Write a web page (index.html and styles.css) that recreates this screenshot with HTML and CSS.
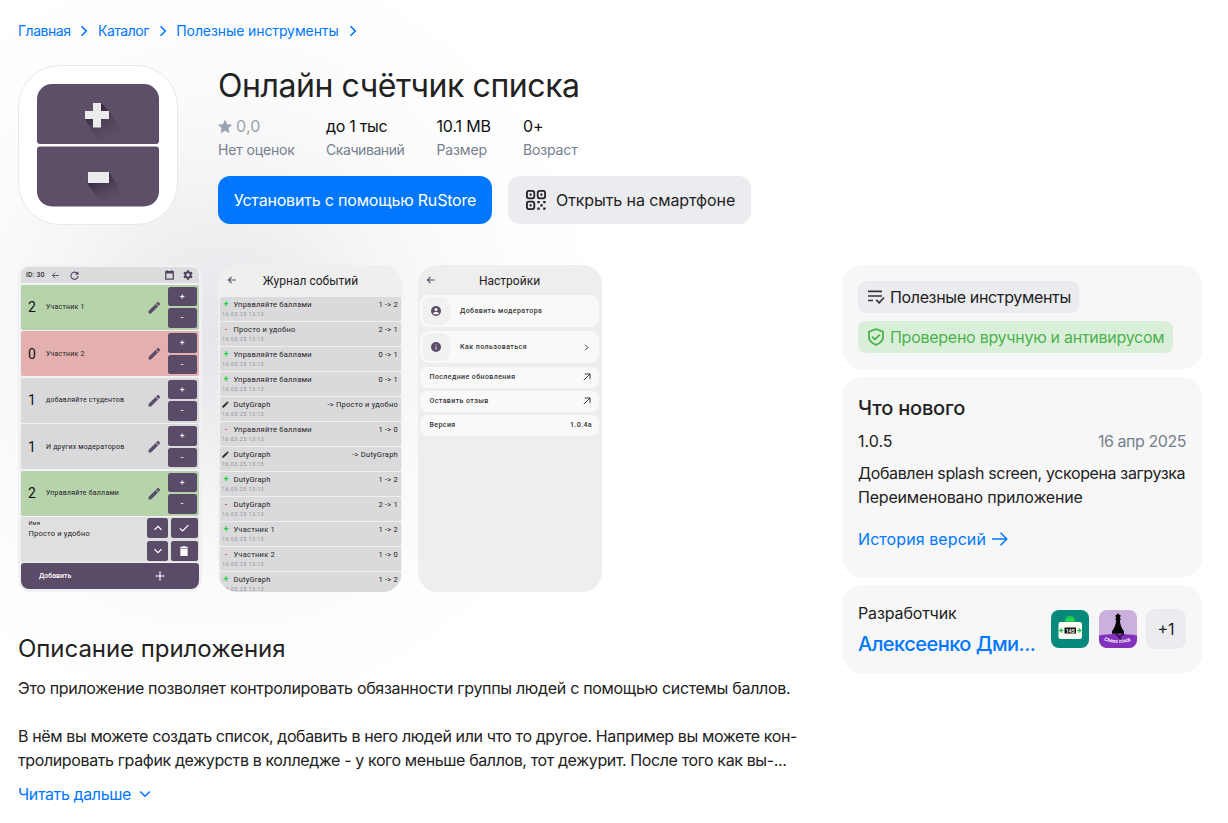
FILE: index.html
```
<!DOCTYPE html>
<html lang="ru">
<head>
	<meta charset="UTF-8" />
	<meta name="viewport" content="width=device-width, initial-scale=1.0" />
	<title>Онлайн счётчик списка</title>
	<link rel="stylesheet" href="styles.css">
</head>
<body>
	<svg class="sprite" width="0" height="0">
		<symbol id="chevron" viewBox="0 0 8 12"><path d="M1.5 1.2 6.3 6 1.5 10.8" fill="none" stroke="currentColor" stroke-width="1.6"/></symbol>
		<symbol id="back" viewBox="0 0 24 24"><path d="M21 12H4M11 4.5 3.5 12l7.500 7.500" fill="none" stroke="currentColor" stroke-width="2.500"/></symbol>
		<symbol id="pencil" viewBox="0 0 24 24"><path d="M1.500 18.300V22.500h4.200L18.200 10l-4.200-4.200zM21.800 6.400c.5-.5.5-1.200 0-1.600l-2.600-2.600c-.5-.5-1.200-.5-1.600 0l-2.300 2.300 4.200 4.200z" fill="currentColor" stroke="currentColor" stroke-width=".8"/></symbol>
		<symbol id="open" viewBox="0 0 10 10"><path d="M1 9 8.800 1.200M2.200 1.200h6.600v6.600" fill="none" stroke="currentColor" stroke-width="1.200"/></symbol>
	</svg>
	<div class="page">
		<nav class="crumbs">
			<a href="#" class="c1">Главная</a><svg><use href="#chevron"/></svg>
			<a href="#" class="c1">Каталог</a><svg><use href="#chevron"/></svg>
			<a href="#" class="c2">Полезные инструменты</a><svg><use href="#chevron"/></svg>
		</nav>
		<header class="head">
			<div class="app_icon">
				<svg width="122" height="123" viewBox="0 0 122 123">
					<defs>
						<linearGradient id="shade" x1="0" y1="0" x2=".6" y2="1"><stop offset=".2" stop-color="#30263b"/><stop offset="1" stop-color="#5d4f68" stop-opacity="0"/></linearGradient>
					</defs>
					<path d="M15 0h92a15 15 0 0 1 15 15v42a3 3 0 0 1-3 3H3a3 3 0 0 1-3-3V15A15 15 0 0 1 15 0z" fill="#5d4f68"/>
					<path d="M3 62.500h116a3 3 0 0 1 3 3V107.500a15 15 0 0 1-15 15H15a15 15 0 0 1-15-15V65.500a3 3 0 0 1 3-3z" fill="#5d4f68"/>
					<path d="M48 35 63 60H93L72 27 64 19z" fill="url(#shade)"/>
					<path d="M50 99 66 122H93L72 88z" fill="url(#shade)"/>
					<path d="M56 19h8v8h8v8h-8v8.500h-8V35h-8v-8h8z" fill="#ebebec"/>
					<path d="M51 88h21v11H51z" fill="#ebebec"/>
				</svg>
			</div>
			<div class="head_info">
				<h1>Онлайн счётчик списка</h1>
				<div class="stats">
					<div class="stat s1"><b class="muted"><svg width="14" height="13" viewBox="0 0 14 13"><path d="m7 .3 1.900 4.200 4.600.5-3.400 3.100.9 4.600L7 10.400l-4 2.300.9-4.600L.5 5l4.600-.5z" fill="#99a2ad" stroke="#99a2ad" stroke-width=".6" stroke-linejoin="round"/></svg>0,0</b><span>Нет оценок</span></div>
					<div class="stat s2"><b>до 1 тыс</b><span>Скачиваний</span></div>
					<div class="stat s3"><b>10.1 MB</b><span>Размер</span></div>
					<div class="stat s4"><b>0+</b><span>Возраст</span></div>
				</div>
				<div class="buttons">
					<button type="button" class="btn btn_blue">Установить с помощью RuStore</button>
					<button type="button" class="btn btn_gray">
						<svg width="20" height="20" viewBox="0 0 20 20" fill="none" stroke="#222" stroke-width="1.800"><rect x=".9" y=".9" width="7.400" height="7.400" rx="2"/><rect x="11.700" y=".9" width="7.400" height="7.400" rx="2"/><rect x=".9" y="11.700" width="7.400" height="7.400" rx="2"/><path d="M3.600 4.600h2M14.400 4.600h2M3.600 15.400h2M11.300 12.200h2.400M17.200 12.200h2.400M14.300 15.400h2.400M11.300 18.600h2.400M17.200 18.600h2.400" stroke-width="2.200"/></svg>
						Открыть на смартфоне
					</button>
				</div>
			</div>
		</header>

		<div class="columns">
			<main class="main">
				<div class="shots">
					<div class="shot shot_list">
						<div class="l_bar">ID: 30
							<svg class="ic_back"><use href="#back"/></svg>
							<svg class="ic_reload" viewBox="0 0 10 10"><path d="M8.300 3A4 4 0 1 0 9 5.500M8.900.8v2.700H6.200" fill="none" stroke="currentColor" stroke-width="1.200"/></svg>
							<svg class="ic_cal" viewBox="0 0 10 11"><path d="M.8 1.800h8.400v8.400H.8zM1 3.200h8M2.700.3v2M7.300.3v2" fill="none" stroke="currentColor" stroke-width="1.400"/></svg>
							<svg class="ic_gear" viewBox="0 0 10 10"><circle cx="5" cy="5" r="2.700" fill="none" stroke="currentColor" stroke-width="2"/><path d="M5 .3v1.500M5 8.200v1.500M.9 2.600l1.300.8M7.800 6.600l1.300.8M.9 7.400l1.300-.8M7.800 3.400l1.300-.8" stroke="currentColor" stroke-width="2.200"/></svg>
						</div>
						<div class="l_row green"><i>2</i><span>Участник 1</span><svg><use href="#pencil"/></svg><div class="pm"><b>+</b><b>-</b></div></div>
						<div class="l_row red"><i>0</i><span>Участник 2</span><svg><use href="#pencil"/></svg><div class="pm"><b>+</b><b>-</b></div></div>
						<div class="l_row"><i>1</i><span>добавляйте студентов</span><svg><use href="#pencil"/></svg><div class="pm"><b>+</b><b>-</b></div></div>
						<div class="l_row"><i>1</i><span>И других модераторов</span><svg><use href="#pencil"/></svg><div class="pm"><b>+</b><b>-</b></div></div>
						<div class="l_row green"><i>2</i><span>Управляйте баллами</span><svg><use href="#pencil"/></svg><div class="pm"><b>+</b><b>-</b></div></div>
						<div class="l_edit">
							<div class="l_name"><small>Имя</small>Просто и удобно</div>
							<div class="l_keys">
								<b><svg viewBox="0 0 10 10"><path d="M1.500 6.700 5 3.300l3.500 3.400"/></svg></b>
								<b><svg viewBox="0 0 10 10"><path d="m.8 5.300 2.700 2.700 5.900-5.900"/></svg></b>
								<b><svg viewBox="0 0 10 10"><path d="M1.500 3.300 5 6.700l3.500-3.400"/></svg></b>
								<b><svg viewBox="0 0 10 10"><path d="M2 3h6v6.500H2zM1.200 1.300h7.600M3.800.7h2.400" class="solid"/></svg></b>
							</div>
						</div>
						<div class="l_add"><span>Добавить</span><svg width="10" height="10" viewBox="0 0 10 10"><path d="M5 .5v9M.5 5h9" stroke="#fff" stroke-width="1.200"/></svg></div>
					</div>
					<div class="shot shot_log">
						<div class="s_title"><svg><use href="#back"/></svg>Журнал событий</div>
						<div class="j_row"><i class="plus">+</i><span>Управляйте баллами</span><em>1 -&gt; 2</em><small>16.03.25 13:13</small></div>
						<div class="j_row"><i class="minus">-</i><span>Просто и удобно</span><em>2 -&gt; 1</em><small>16.03.25 13:13</small></div>
						<div class="j_row"><i class="plus">+</i><span>Управляйте баллами</span><em>0 -&gt; 1</em><small>16.03.25 13:13</small></div>
						<div class="j_row"><i class="plus">+</i><span>Управляйте баллами</span><em>0 -&gt; 1</em><small>16.03.25 13:13</small></div>
						<div class="j_row"><i><svg><use href="#pencil"/></svg></i><span>DutyGraph</span><em>-&gt; Просто и удобно</em><small>16.03.25 13:13</small></div>
						<div class="j_row"><i class="minus">-</i><span>Управляйте баллами</span><em>1 -&gt; 0</em><small>16.03.25 13:13</small></div>
						<div class="j_row"><i><svg><use href="#pencil"/></svg></i><span>DutyGraph</span><em>-&gt; DutyGraph</em><small>16.03.25 13:13</small></div>
						<div class="j_row"><i class="plus">+</i><span>DutyGraph</span><em>1 -&gt; 2</em><small>16.03.25 13:13</small></div>
						<div class="j_row"><i class="minus">-</i><span>DutyGraph</span><em>2 -&gt; 1</em><small>16.03.25 13:13</small></div>
						<div class="j_row"><i class="plus">+</i><span>Участник 1</span><em>1 -&gt; 2</em><small>16.03.25 13:13</small></div>
						<div class="j_row"><i class="minus">-</i><span>Участник 2</span><em>1 -&gt; 0</em><small>16.03.25 13:13</small></div>
						<div class="j_row"><i class="plus">+</i><span>DutyGraph</span><em>1 -&gt; 2</em><small>16.03.25 13:13</small></div>
					</div>
					<div class="shot shot_set">
						<div class="s_title"><svg><use href="#back"/></svg>Настройки</div>
						<div class="n_big"><i><svg viewBox="0 0 10 10"><circle cx="5" cy="5" r="5" fill="#5a4b68"/><circle cx="5" cy="3.500" r="1.500" fill="#fff"/><path d="M2 7.400c.6-2 5.400-2 6 0C7.200 8.600 2.800 8.600 2 7.400z" fill="#fff"/></svg></i>Добавить модератора</div>
						<div class="n_big"><i><svg viewBox="0 0 10 10"><circle cx="5" cy="5" r="5" fill="#5a4b68"/><path d="M5 4.400v3.200M5 2.300v1.100" stroke="#ddd"/></svg></i>Как пользоваться<svg class="go"><use href="#chevron"/></svg></div>
						<div class="n_row">Последние обновления<svg><use href="#open"/></svg></div>
						<div class="n_row">Оставить отзыв<svg><use href="#open"/></svg></div>
						<div class="n_row">Версия<span>1.0.4a</span></div>
					</div>
				</div>
				<section class="about">
					<h2>Описание приложения</h2>
					<p class="t1">Это приложение позволяет контролировать обязанности группы людей с помощью системы баллов.</p>
					<p class="t2">В нём вы можете создать список, добавить в него людей или что то другое. Например вы можете кон-</p>
					<p class="t3">тролировать график дежурств в колледже - у кого меньше баллов, тот дежурит. После того как вы-...</p>
					<a href="#" class="more">Читать дальше<svg width="12" height="8" viewBox="0 0 12 8"><path d="M1.200 1.500 6 6.200l4.800-4.700" fill="none" stroke="currentColor" stroke-width="1.600"/></svg></a>
				</section>
			</main>
			<aside class="side">
				<div class="card tags">
					<span class="tag tag_cat"><svg width="18" height="16" viewBox="0 0 18 16" fill="none" stroke="#33353a" stroke-width="1.700"><path d="M1 2.400h14M1 7h14M1 11.500h5M9.200 10.800l3 3 4.800-5.300"/></svg>Полезные инструменты</span>
					<span class="tag tag_ok"><svg width="18" height="18" viewBox="0 0 18 18" fill="none" stroke="#4bb34b" stroke-width="1.800"><path d="M9 1.200 16 3.600v5.600c0 3.500-2.900 6-7 7.700-4.100-1.700-7-4.200-7-7.700V3.600z" stroke-linejoin="round"/><path d="m5.200 8.700 2.700 2.700 5-4.800"/></svg>Проверено вручную и антивирусом</span>
				</div>
				<div class="card news">
					<h3>Что нового</h3>
					<div class="ver"><span>1.0.5</span><span class="date">16 апр 2025</span></div>
					<p class="n1">Добавлен splash screen, ускорена загрузка</p>
					<p class="n2">Переименовано приложение</p>
					<a href="#" class="history">История версий<svg width="16" height="14" viewBox="0 0 16 14"><path d="M0 7h14.500M8.500.8 14.800 7l-6.300 6.200" fill="none" stroke="currentColor" stroke-width="1.500"/></svg></a>
				</div>
				<div class="card dev">
					<div class="dev_name"><span>Разработчик</span><a href="#">Алексеенко Дми...</a></div>
					<svg class="app" width="38" height="38" viewBox="0 0 38 38">
						<rect width="38" height="38" rx="8" fill="#04897a"/>
						<path d="M14 12a5 5.500 0 0 1 10 0zM15.500 5.500l1.200 2M22.500 5.500l-1.200 2" fill="#1fcb4f" stroke="#1fcb4f" stroke-width=".8"/>
						<circle cx="17" cy="9.700" r=".5" fill="#fff"/><circle cx="21" cy="9.700" r=".5" fill="#fff"/>
						<rect x="7.500" y="12" width="23.500" height="17" rx="2" fill="#fcfcf2"/>
						<path d="M8.500 20.500h4M26 20.500h4M11 18.500l-2.300 2 2.300 2M27.600 18.500l2.300 2-2.300 2" fill="none" stroke="#20c44d" stroke-width="1.100"/>
						<rect x="13.500" y="17.500" width="11.500" height="6" fill="#111"/>
						<text x="19.200" y="22.500" text-anchor="middle" class="tiny">145</text>
					</svg>
					<svg class="app" width="38" height="38" viewBox="0 0 38 38">
						<rect width="38" height="38" rx="8" fill="#cbb0df"/>
						<path d="M0 25.500c10-2 28-2 38 0V30a8 8 0 0 1-8 8H8a8 8 0 0 1-8-8z" fill="#8231bd"/>
						<path d="M19 3l1 1.500 1.800 1-1 2.500 1.200 1.500-1.200.8c.4 5 2 8.200 4.200 11v2.500H13v-2.500c2.200-2.800 3.800-6 4.200-11L16 9.500 17.200 8l-1-2.500L18 4.500z" fill="#050505"/>
						<path d="m17 24 8 8M25 24l-5 3" stroke="#220b35" stroke-width="1.200"/>
						<path id="arc" d="M5 30.500Q19 35 34 30.500" fill="none"/>
						<text class="chess"><textPath href="#arc">Chess clock</textPath></text>
					</svg>
					<span class="plus_one">+1</span>
				</div>
			</aside>
		</div>
	</div>
</body>
</html>
```
FILE: styles.css
```
*{ margin: 0;padding: 0;box-sizing: border-box;}
a{text-decoration: none;color: #07f;}
svg{display: block;flex: none;}
i,em{font-style: normal;}
body{
	background: #fff;
	color: #222;
	font-family: Inter, "Noto Sans", sans-serif;
	font-size: 16px;
	line-height: 24px;
}
.sprite{position: absolute;}
.page{
	width: 1228px;
	height: 823px;
	overflow: hidden;
	padding: 21px 26px 0 18px;
	background: radial-gradient(circle 390px at 220px 335px, #e6e5e9 0, #edecef 22%, #f5f4f6 42%, #fafafb 60%, #fdfdfd 80%, #fff 100%);
}
.crumbs{
	display: flex;
	align-items: center;
	height: 20px;
	font-size: 14px;
	line-height: 20px;
}
.c1{letter-spacing: -.48px;}
.c2{letter-spacing: -.1px;}
.crumbs svg{
	width: 8px;
	height: 12px;
	margin: 0 9.500px 0 10px;
	color: #07f;
}
.crumbs .c2 + svg{margin-left: 10px;}
.head{
	display: flex;
	gap: 40px;
	margin-top: 24px;
}
.app_icon{
	width: 160px;
	height: 160px;
	border-radius: 42px;
	border: 1px solid #e8e8eb;
	background: #fff;
	padding: 18px;
}
.head_info{white-space: nowrap;}
h1{
	padding-top: 1px;
	font-size: 32px;
	line-height: 40px;
	font-weight: 400;
	letter-spacing: -.43px;
}
.stats{
	display: flex;
	margin-top: 8px;
	height: 46px;
}
.stat b{
	display: flex;
	align-items: center;
	gap: 4px;
	height: 24px;
	font-weight: 400;
	letter-spacing: -.15px;
	color: #111;
}
.stat span{
	display: block;
	font-size: 14px;
	line-height: 24px;
	letter-spacing: -.15px;
	color: #76808c;
}
.stat b.muted{color: #99a2ad;letter-spacing: .2px;}
.s1{width: 108px;}
.s2{width: 110.500px;}
.s2 b{letter-spacing: -.3px;}
.s2 span{letter-spacing: -.42px;}
.s3{width: 86.500px;}
.buttons{
	display: flex;
	gap: 16px;
	margin-top: 16px;
}
.btn{
	display: flex;
	align-items: center;
	justify-content: center;
	height: 48px;
	border: 0;
	border-radius: 12px;
	font: 400 16px/24px Inter, "Noto Sans", sans-serif;
	white-space: nowrap;
}
.btn_blue{width: 274px;background: #07f;color: #fff;letter-spacing: -.19px;}
.btn_gray{
	width: 243px;
	justify-content: flex-start;
	padding-left: 18px;
	gap: 10px;
	background: #ebecf0;
	color: #222;
	letter-spacing: -.1px;
}

.columns{
	display: flex;
	justify-content: space-between;
	margin-top: 40px;
}
.main{width: 784px;}
.shots{display: flex;gap: 16px;}
.shot{
	width: 184px;
	height: 327px;
	border-radius: 20px;
	overflow: hidden;
	background: #efeff0;
	font-family: Roboto, "Noto Sans", sans-serif;
	font-size: 7px;
	line-height: 10px;
	letter-spacing: .3px;
	color: #222;
	white-space: nowrap;
}
/* список участников */
.shot_list{
	border-radius: 12px;
	padding: 2px 3px;
	background: #f1f1f3;
}
.l_bar{
	display: flex;
	align-items: center;
	height: 16px;
	padding: 0 6px 0 5px;
	border-radius: 8px 8px 0 0;
	background: #dcdcde;
	color: #333;
	font-weight: 500;
	letter-spacing: .1px;
}
.l_bar svg{width: 9px;height: 9px;color: #51445f;}
.l_bar .ic_back{margin: 0 10px 0 6px;}
.l_bar .ic_cal{margin-left: auto;margin-right: 9px;height: 10px;}
.l_bar .ic_gear{width: 10px;height: 10px;}
.l_row{
	display: flex;
	align-items: center;
	height: 45px;
	margin-top: 1.5px;
	padding: 0 2.500px 0 7px;
	border-radius: 2px;
	background: #d9d9db;
}
.green{background: #b6d3ac;}
.red{background: #e4b0af;}
.l_row i{width: 18px;font-size: 14px;letter-spacing: 0;color: #111;}
.l_row span{flex: 1;letter-spacing: .22px;}
.l_row svg{width: 13px;height: 13px;margin-right: 7px;color: #5a4b68;}
.pm{display: grid;gap: 2px;}
.pm b{
	width: 28.500px;
	height: 19.500px;
	border-radius: 2.500px;
	background: #5a4b68;
	color: #fff;
	font-size: 8px;
	line-height: 19px;
	text-align: center;
}
.l_edit{
	display: flex;
	justify-content: space-between;
	height: 45px;
	margin-top: 1.5px;
	padding: 1px 1.500px 0 7.500px;
	background: #dfdfe0;
}
.l_name{padding-top: 1px;font-size: 7.500px;line-height: 9.500px;letter-spacing: .2px;}
.l_name small{display: block;font-size: 5.500px;}
.l_keys{
	display: grid;
	grid-template-columns: 21px 27px;
	grid-template-rows: 20px 20px;
	gap: 2.500px;
}
.l_keys b{
	display: flex;
	align-items: center;
	justify-content: center;
	border-radius: 2.500px;
	background: #5a4b68;
}
.l_keys svg{width: 10px;height: 10px;fill: none;stroke: #fff;stroke-width: 1.200;}
.l_keys .solid{fill: #fff;}
.l_add{
	display: flex;
	align-items: center;
	justify-content: space-between;
	height: 26px;
	margin-top: 1px;
	padding: 0 34px 0 18px;
	border-radius: 3px 3px 8px 8px;
	background: #5a4b68;
	color: #fff;
	font-weight: 500;
	letter-spacing: 0;
}
/* журнал и настройки */
.s_title{
	position: relative;
	height: 31px;
	font-size: 12px;
	line-height: 33px;
	text-align: center;
	letter-spacing: .02px;
}
.s_title svg{
	position: absolute;
	left: 7px;
	top: 10px;
	width: 10px;
	height: 10px;
	color: #51445f;
}
.shot_log{padding: 0 1px 0 2px;}
.j_row{
	display: grid;
	grid-template-columns: 11.500px 1fr auto;
	grid-template-rows: 12.500px 10px;
	height: 24px;
	margin-bottom: 1px;
	padding: 1px 3px 0 2px;
	border-radius: 2px;
	background: #dadadc;
	font-size: 7.500px;
	line-height: 13px;
	letter-spacing: .24px;
}
.j_row i{text-align: center;width: 8px;font-weight: 700;}
.j_row i svg{width: 7px;height: 7px;margin-top: 3px;}
.j_row .plus{color: #1ed43c;font-size: 9px;}
.j_row .minus{color: #e3414b;}
.j_row small{
	grid-column: 1 / 4;
	font-size: 5.500px;
	line-height: 9px;
	letter-spacing: .4px;
	color: #949497;
}
.shot_log .s_title{height: 31.500px;}
.shot_set{padding: 0 3px 0 2px;background: #eee;font-weight: 500;color: #333;}
.shot_set .s_title{height: 30px;font-weight: 400;color: #222;}
.shot_set .s_title svg{left: 6px;}
.n_big{
	display: flex;
	align-items: center;
	height: 32px;
	margin-bottom: 4px;
	padding: 0 10px 0 2px;
	border-radius: 9px;
	background: #f9f9f9;
	letter-spacing: .45px;
}
.n_big i{
	display: flex;
	align-items: center;
	justify-content: center;
	width: 28px;
	height: 28px;
	margin-right: 10px;
	border-radius: 9px;
	background: #f1f1f1;
}
.n_big i svg{width: 10px;height: 10px;}
.n_big .go{width: 5px;height: 7px;margin-left: auto;}
.n_row{
	display: flex;
	align-items: center;
	justify-content: space-between;
	height: 21px;
	margin-bottom: 3px;
	padding: 0 7px 0 9.500px;
	border-radius: 8px;
	background: #f9f9f9;
	letter-spacing: .42px;
}
.n_big + .n_row{margin-top: -.500px;}
.n_row svg{width: 8px;height: 8px;margin-right: 1px;}

.about{padding-top: 43px;white-space: nowrap;}
h2{
	font-size: 24px;
	line-height: 28px;
	font-weight: 400;
	letter-spacing: -.05px;
	margin-bottom: 13px;
}
.t1{margin-bottom: 24px;letter-spacing: -.31px;}
.t2{letter-spacing: -.39px;}
.t3{letter-spacing: -.38px;}
.more{
	display: flex;
	align-items: center;
	gap: 8px;
	margin-top: 10px;
	letter-spacing: -.38px;
}
.side{
	display: flex;
	flex-direction: column;
	gap: 8px;
	width: 360px;
	white-space: nowrap;
}
.card{border-radius: 20px;background: #f7f7f7;padding: 16px;}
.tags{
	display: flex;
	flex-direction: column;
	align-items: flex-start;
	gap: 8px;
	height: 104px;
}
.tag{
	display: flex;
	align-items: center;
	gap: 5px;
	height: 32px;
	padding-left: 9px;
	border-radius: 8px;
}
.tag_cat{width: 221px;background: #ebecf0;letter-spacing: -.35px;}
.tag_ok{width: 315px;background: #daefda;color: #4bb34b;letter-spacing: -.27px;}
.news{height: 200px;padding-top: 19px;}
h3{font-size: 20px;line-height: 24px;font-weight: 500;letter-spacing: -.2px;}
.ver{
	display: flex;
	justify-content: space-between;
	margin: 9px 0 8px;
}
.date{color: #76808c;letter-spacing: -.45px;}
.n1{letter-spacing: -.37px;}
.n2{letter-spacing: -.2px;}
.history{
	display: flex;
	align-items: center;
	gap: 6px;
	margin-top: 18px;
	letter-spacing: .08px;
}
.dev{
	display: flex;
	align-items: center;
	height: 88px;
}
.dev_name{width: 193px;flex: none;}
.dev_name span{display: block;line-height: 24px;padding-top: 1px;letter-spacing: -.12px;}
.dev_name a{display: block;font-size: 20px;font-weight: 500;line-height: 28px;margin-top: 5px;letter-spacing: -.52px;}
.app{margin-right: 10px;}
.app + .plus_one{margin-left: -1px;}
.tiny{font: 700 5px Roboto, sans-serif;fill: #fff;}
.chess{font: 700 5px Roboto, sans-serif;fill: #fff;}
.plus_one{
	width: 40px;
	height: 40px;
	flex: none;
	border-radius: 9px;
	background: #ebecf0;
	line-height: 40px;
	text-align: center;
}
```
